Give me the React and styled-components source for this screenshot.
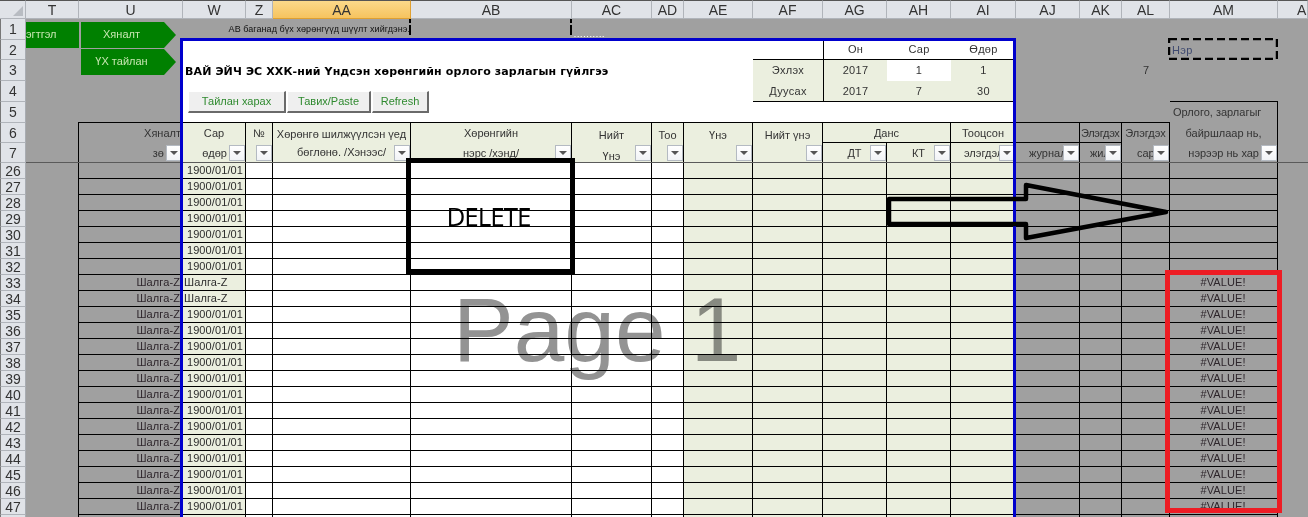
import React from 'react';
import styled, { createGlobalStyle, css } from 'styled-components';

const COLS = [['T',53],['U',104],['W',63],['Z',27],['AA',138],['AB',161],['AC',80],['AD',32],['AE',69],['AF',70],['AG',64],['AH',64],['AI',65],['AJ',64],['AK',42],['AL',48],['AM',108],['AN',30]];
const TOP_ROWS = [21,20,21,21,21,20,20];
const BODY = Array.from({ length: 23 }, (_, i) => 26 + i);
const colLine = (name) => COLS.findIndex((c) => c[0] === name) + 2;
const rowLine = (r) => (r <= 7 ? r + 1 : r - 18 + 1);

const Global = createGlobalStyle`
  html, body { margin: 0; padding: 0; background: #a0a0a0; overflow: hidden; }
`;

const place = css`
  grid-column: ${(p) => colLine(p.$col)} / ${(p) => (p.$to ? colLine(p.$to) + 1 : 'span 1')};
  grid-row: ${(p) => rowLine(p.$row)} / span ${(p) => p.$rows || 1};
`;

const Sheet = styled.div`
  position: relative;
  width: 1308px;
  height: 517px;
  overflow: hidden;
  display: grid;
  grid-template-columns: 26px ${COLS.map((c) => c[1] + 'px').join(' ')};
  grid-template-rows: 19px ${TOP_ROWS.map((h) => h + 'px').join(' ')} repeat(23, 16px);
  background: #a0a0a0;
  color: #2c2c2c;
  font: 11px/1 "Liberation Sans", Arial, sans-serif;
`;

const Corner = styled.div`
  grid-column: 1; grid-row: 1;
  position: relative;
  background: #e0e3e8;
  border-top: 1px solid #555;
  border-bottom: 1px solid #b0b4ba;
  border-right: 1px solid #b0b4ba;
  box-sizing: border-box;
  &::after {
    content: ''; position: absolute; right: 2px; bottom: 2px;
    border-style: solid; border-width: 0 0 10px 10px;
    border-color: transparent transparent #b8bcc2 transparent;
  }
`;
const ColHead = styled.div`
  grid-column: ${(p) => colLine(p.$name)};
  grid-row: 1;
  box-sizing: border-box;
  display: flex; align-items: center;
  justify-content: ${(p) => (p.$edge ? 'flex-start' : 'center')};
  padding-left: ${(p) => (p.$edge ? 19 : 0)}px;
  border-top: 1px solid #555;
  border-right: 1px solid ${(p) => (p.$sel ? '#e0a030' : '#b0b4ba')};
  border-bottom: 1px solid ${(p) => (p.$sel ? '#e0a030' : '#b0b4ba')};
  background: ${(p) => (p.$sel ? 'linear-gradient(#fbd98a,#f6c35f)' : '#e0e3e8')};
  font-size: 14px;
  color: #333;
`;
const RowHead = styled.div`
  grid-column: 1;
  grid-row: ${(p) => p.$line};
  box-sizing: border-box;
  display: flex; align-items: center; justify-content: center;
  background: #e0e3e8;
  border-left: 1px solid #777;
  border-right: 1px solid #a8acb2;
  border-bottom: 1px solid #b0b4ba;
  font-size: 14px;
  color: #333;
`;

const WhitePanel = styled.div`
  ${place};
  background: #fff;
`;
const FormCell = styled.div`
  ${place};
  box-sizing: border-box;
  display: flex; align-items: center; justify-content: center;
  background: ${(p) => (p.$fill ? '#ebefdf' : 'transparent')};
  ${(p) => p.$rule && 'border-bottom: 1px solid #000;'}
  ${(p) => p.$left && 'border-left: 1px solid #000;'}
  color: #333;
  letter-spacing: .3px;
`;
const Notice = styled.div`
  ${place};
  display: flex; align-items: center; justify-content: flex-end;
  padding-right: 1px;
  font-size: 9px;
  letter-spacing: .06px;
  color: #111;
  white-space: nowrap;
`;
const TinyDots = styled.div`
  ${place};
  padding: 12px 0 0 2px;
  font: bold 7px/1 "Liberation Sans", sans-serif;
  letter-spacing: 1.2px;
  color: #fff;
`;
const Title = styled.div`
  ${place};
  display: flex; align-items: center;
  padding: 1px 0 0 1px;
  margin-left: 1px;
  font: bold 11px/1 "DejaVu Sans", sans-serif;
  letter-spacing: .12px;
  color: #000;
  white-space: nowrap;
`;
const Toolbar = styled.div`
  ${place};
  display: flex; align-items: flex-start; gap: 1px;
  padding: 10px 0 0 5px;
`;
const ToolButton = styled.div`
  box-sizing: border-box;
  width: ${(p) => p.$w}px;
  height: 22px;
  display: flex; align-items: center; justify-content: center;
  background: #efefef;
  border-top: 1px solid #fff;
  border-left: 1px solid #fff;
  border-right: 2px solid #6a6a6a;
  border-bottom: 2px solid #6a6a6a;
  color: #2f8a2f;
`;
const PlainNumber = styled.div`
  ${place};
  display: flex; align-items: center; justify-content: center;
  color: #333;
`;

const HeadCell = styled.div`
  ${place};
  position: relative;
  box-sizing: border-box;
  ${(p) => !p.$sub && css`margin-top: -1px; border-top: 1px solid #000;`}
  ${(p) => p.$rule && 'border-bottom: 1px solid #000;'}
  border-right: 1px solid #000;
  background: ${(p) => (p.$fill ? '#ebefdf' : 'transparent')};
  display: grid;
  grid-template-rows: ${(p) => p.$track || '20px'};
  color: #333;
  overflow: hidden;
`;
const HeadLine = styled.div`
  white-space: nowrap;
  line-height: ${(p) => p.$lh || 20}px;
  text-align: ${(p) => p.$align || 'center'};
  padding: 0 ${(p) => p.$inset || 0}px 0 ${(p) => p.$pad || 0}px;
  letter-spacing: ${(p) => p.$gap || 0}px;
`;
const FilterBox = styled.div`
  position: absolute; right: 0; bottom: 2px;
  box-sizing: border-box;
  width: 16px; height: 16px;
  background: linear-gradient(#fff, #f1f3f6);
  border: 1px solid #b4bac2;
  &::after {
    content: ''; position: absolute; left: 3px; top: 5px;
    border-style: solid; border-width: 4px 4px 0 4px;
    border-color: #555 transparent transparent transparent;
  }
`;
const TLine = styled.div`
  ${place};
  border-right: 1px solid #000;
  margin-top: ${(p) => (p.$shift ? -1 : 0)}px;
`;
const FreezeLine = styled.div`
  grid-column: 2 / -1;
  grid-row: 8;
  align-self: end;
  height: 1px;
  background: #5a5a5a;
  z-index: 1;
`;

const BodyCell = styled.div`
  ${place};
  box-sizing: border-box;
  display: flex; align-items: center;
  justify-content: ${(p) => p.$just || 'flex-end'};
  padding: 0 2px 0 1px;
  border-right: 1px solid #000;
  border-bottom: 1px solid #000;
  background: ${(p) => (p.$tone === 'cream' ? '#ebefdf' : p.$tone === 'white' ? '#fff' : 'transparent')};
  color: ${(p) => (p.$tone === 'cream' ? '#2c2c2c' : '#2e262c')};
  letter-spacing: .1px;
  white-space: nowrap;
  overflow: hidden;
`;

const BlueFrame = styled.div`
  position: absolute; left: 180px; top: 38px;
  box-sizing: border-box;
  width: 836px; height: 520px;
  border: 3px solid #0000cd;
  z-index: 3;
  pointer-events: none;
`;
const Pointer = styled.div`
  position: absolute; left: ${(p) => p.$x}px; top: ${(p) => p.$y}px;
  width: ${(p) => p.$w}px; height: ${(p) => p.$h}px;
  background: #008000;
  clip-path: polygon(0 0, calc(100% - 12px) 0, 100% 50%, calc(100% - 12px) 100%, 0 100%);
  color: #c6e6b0;
  font-size: 11px;
  display: flex; align-items: center;
  justify-content: center;
  padding: 0 14px 2px 0;
  box-sizing: border-box;
  z-index: 2;
`;
const TPointer = styled(Pointer)`
  clip-path: none;
  justify-content: flex-start;
  padding: 0 0 2px;
  overflow: hidden;
`;
const Tick = styled.div`
  position: absolute; left: ${(p) => p.$x}px; top: 19px;
  width: 2px; height: 16px;
  background: repeating-linear-gradient(#000 0 4px, transparent 4px 6px, #000 6px 16px);
  z-index: 2;
`;
const NameBox = styled.div`
  position: absolute; left: 1168px; top: 38px;
  width: 110px; height: 22px;
  display: flex; align-items: center;
  padding: 2px 0 0 4px;
  box-sizing: border-box;
  color: #3f4a70;
  letter-spacing: .3px;
  z-index: 2;
`;
const NameDash = styled.svg`
  position: absolute; left: 0; top: 0;
`;
const DeleteBox = styled.div`
  position: absolute; left: 406px; top: 158px;
  box-sizing: border-box;
  width: 169px; height: 116px;
  border: 5px solid #000;
  display: flex; align-items: center; justify-content: center;
  font: 26px/1 "Open Sans", sans-serif;
  letter-spacing: -1px;
  color: #000;
  padding-right: 4px;
  z-index: 2;
`;
const Watermark = styled.div`
  position: absolute; left: 453px; top: 280px;
  font: 91px/100px "Liberation Sans", Arial, sans-serif;
  color: #939393;
  mix-blend-mode: multiply;
  white-space: nowrap;
  z-index: 2;
  pointer-events: none;
`;
const ArrowArt = styled.svg`
  position: absolute; left: 880px; top: 178px;
  z-index: 4;
`;
const RedFrame = styled.div`
  position: absolute; left: 1165px; top: 270px;
  box-sizing: border-box;
  width: 117px; height: 243px;
  border: 5px solid #ed1c24;
  z-index: 4;
`;

const creamCols = ['W', 'AE', 'AF', 'AG', 'AH', 'AI'];
const whiteCols = ['Z', 'AA', 'AB', 'AC', 'AD'];
const lineCols = ['U', 'W', 'Z', 'AA', 'AB', 'AC', 'AD', 'AE', 'AF', 'AG', 'AH', 'AI', 'AJ', 'AK', 'AL', 'AM'];

const Filter = () => <FilterBox />;

function bodyValue(col, row) {
  const checked = row >= 33;
  if (row > 47) return null;
  if (col === 'U' && checked) return 'Шалга-Z';
  if (col === 'W') return row === 33 || row === 34 ? 'Шалга-Z' : '1900/01/01';
  if (col === 'AM' && checked) return '#VALUE!';
  return null;
}

export default function App() {
  return (
    <Sheet>
      <Global />
      <Corner />
      {COLS.map(([name]) => (
        <ColHead key={name} $name={name} $sel={name === 'AA'} $edge={name === 'AN'}>{name === 'AN' ? 'A' : name}</ColHead>
      ))}
      {[1, 2, 3, 4, 5, 6, 7].map((r) => <RowHead key={r} $line={rowLine(r)}>{r}</RowHead>)}
      {BODY.map((r) => <RowHead key={r} $line={rowLine(r)}>{r < 48 ? r : ''}</RowHead>)}

      <WhitePanel $col="W" $to="AI" $row={2} $rows={4} />
      <Notice $col="W" $to="AA" $row={1}>АВ баганад бүх хөрөнгүүд шүүлт хийгдэнэ.</Notice>
      <TinyDots $col="AC" $row={1}>..........</TinyDots>
      <Title $col="W" $to="AF" $row={3}>ВАЙ ЭЙЧ ЭС ХХК-ний Үндсэн хөрөнгийн орлого зарлагын гүйлгээ</Title>
      <Toolbar $col="W" $to="AB" $row={4} $rows={2}>
        <ToolButton $w={98}>Тайлан харах</ToolButton>
        <ToolButton $w={84}>Тавих/Paste</ToolButton>
        <ToolButton $w={57}>Refresh</ToolButton>
      </Toolbar>

      <FormCell $col="AF" $row={2} $rule />
      <FormCell $col="AG" $row={2} $rule $left>Он</FormCell>
      <FormCell $col="AH" $row={2} $rule>Сар</FormCell>
      <FormCell $col="AI" $row={2} $rule>Өдөр</FormCell>
      <FormCell $col="AF" $row={3} $fill>Эхлэх</FormCell>
      <FormCell $col="AG" $row={3} $fill $left>2017</FormCell>
      <FormCell $col="AH" $row={3}>1</FormCell>
      <FormCell $col="AI" $row={3} $fill>1</FormCell>
      <FormCell $col="AF" $row={4} $fill $rule>Дуусах</FormCell>
      <FormCell $col="AG" $row={4} $fill $rule $left>2017</FormCell>
      <FormCell $col="AH" $row={4} $fill $rule>7</FormCell>
      <FormCell $col="AI" $row={4} $fill $rule>30</FormCell>
      <PlainNumber $col="AL" $row={3}>7</PlainNumber>

      <TLine $col="T" $row={6} $rows={2} $shift />
      <HeadCell $col="U" $row={6} $rows={2} $track="20px 20px">
        <HeadLine $align="right" $inset={1}>Хяналт</HeadLine>
        <HeadLine $align="right" $inset={18}>зө</HeadLine>
        <Filter />
      </HeadCell>
      <HeadCell $col="W" $row={6} $rows={2} $fill $track="20px 20px">
        <HeadLine>Сар</HeadLine>
        <HeadLine $align="right" $inset={18}>өдөр</HeadLine>
        <Filter />
      </HeadCell>
      <HeadCell $col="Z" $row={6} $rows={2} $fill $track="20px 20px">
        <HeadLine>№</HeadLine>
        <Filter />
      </HeadCell>
      <HeadCell $col="AA" $row={6} $rows={2} $fill $track="22px 15px">
        <HeadLine $lh={23}>Хөрөнгө шилжүүлсэн үед</HeadLine>
        <HeadLine $lh={15}>бөглөнө. /Хэнээс/</HeadLine>
        <Filter />
      </HeadCell>
      <HeadCell $col="AB" $row={6} $rows={2} $fill $track="20px 20px">
        <HeadLine>Хөрөнгийн</HeadLine>
        <HeadLine>нэрс /хэнд/</HeadLine>
        <Filter />
      </HeadCell>
      <HeadCell $col="AC" $row={6} $rows={2} $fill $track="23px 18px">
        <HeadLine $lh={25}>Нийт</HeadLine>
        <HeadLine>Үнэ</HeadLine>
        <Filter />
      </HeadCell>
      <HeadCell $col="AD" $row={6} $rows={2} $fill $track="23px 18px">
        <HeadLine $lh={25}>Тоо</HeadLine>
        <Filter />
      </HeadCell>
      <HeadCell $col="AE" $row={6} $rows={2} $fill $track="23px 18px">
        <HeadLine $lh={25}>Үнэ</HeadLine>
        <Filter />
      </HeadCell>
      <HeadCell $col="AF" $row={6} $rows={2} $fill $track="23px 18px">
        <HeadLine $lh={25}>Нийт үнэ</HeadLine>
        <Filter />
      </HeadCell>
      <HeadCell $col="AG" $to="AH" $row={6} $fill $rule>
        <HeadLine>Данс</HeadLine>
      </HeadCell>
      <HeadCell $col="AG" $row={7} $sub $fill>
        <HeadLine>ДТ</HeadLine>
        <Filter />
      </HeadCell>
      <HeadCell $col="AH" $row={7} $sub $fill>
        <HeadLine>КТ</HeadLine>
        <Filter />
      </HeadCell>
      <HeadCell $col="AI" $row={6} $fill $rule>
        <HeadLine>Тооцсон</HeadLine>
      </HeadCell>
      <HeadCell $col="AI" $row={7} $sub $fill>
        <HeadLine $align="left" $pad={13}>элэгдэл</HeadLine>
        <Filter />
      </HeadCell>
      <HeadCell $col="AJ" $row={6} $rule />
      <HeadCell $col="AJ" $row={7} $sub>
        <HeadLine $align="left" $pad={13}>журнал</HeadLine>
        <Filter />
      </HeadCell>
      <HeadCell $col="AK" $row={6} $rule>
        <HeadLine $align="left" $pad={1} $gap={-0.3}>Элэгдэх</HeadLine>
      </HeadCell>
      <HeadCell $col="AK" $row={7} $sub>
        <HeadLine $align="left" $pad={10}>жил</HeadLine>
        <Filter />
      </HeadCell>
      <HeadCell $col="AL" $row={6} $rows={2} $track="20px 20px">
        <HeadLine>Элэгдэх</HeadLine>
        <HeadLine $align="left" $pad={15}>сар</HeadLine>
        <Filter />
      </HeadCell>
      <HeadCell $col="AM" $row={5} $rows={3} $track="21px 20px 20px">
        <HeadLine $align="left" $pad={3}>Орлого, зарлагыг</HeadLine>
        <HeadLine>байршлаар нь,</HeadLine>
        <HeadLine $align="right" $inset={18}>нэрээр нь хар</HeadLine>
        <Filter />
      </HeadCell>
      <FreezeLine />

      {BODY.map((r) => (
        <React.Fragment key={r}>
          <TLine $col="T" $row={r} />
          {lineCols.map((c) => {
            const v = bodyValue(c, r);
            const tone = creamCols.includes(c) ? 'cream' : whiteCols.includes(c) ? 'white' : 'none';
            return (
              <BodyCell key={c} $col={c} $row={r} $tone={tone} $just={c === 'AM' ? 'center' : c === 'W' && (r === 33 || r === 34) ? 'flex-start' : 'flex-end'}>
                {v}
              </BodyCell>
            );
          })}
        </React.Fragment>
      ))}

      <BlueFrame />
      <TPointer $x={26} $y={22} $w={53} $h={26}>эгтгэл</TPointer>
      <Pointer $x={81} $y={22} $w={95} $h={26}>Хяналт</Pointer>
      <Pointer $x={81} $y={49} $w={95} $h={26}>ҮХ тайлан</Pointer>
      <Tick $x={409} />
      <Tick $x={570} />
      <NameBox>
        <NameDash width="110" height="22">
          <rect x="1" y="1" width="108" height="20" fill="none" stroke="#000" strokeWidth="2.5" strokeDasharray="8 4" />
        </NameDash>
        Нэр
      </NameBox>
      <DeleteBox>DELETE</DeleteBox>
      <Watermark>Page 1</Watermark>
      <ArrowArt width="300" height="70" viewBox="880 178 300 70">
        <path d="M889 199 H1026 V185 L1166 212 L1026 238 V224 H889 Z" fill="none" stroke="#000" strokeWidth="4.5" strokeLinejoin="round" />
      </ArrowArt>
      <RedFrame />
    </Sheet>
  );
}
